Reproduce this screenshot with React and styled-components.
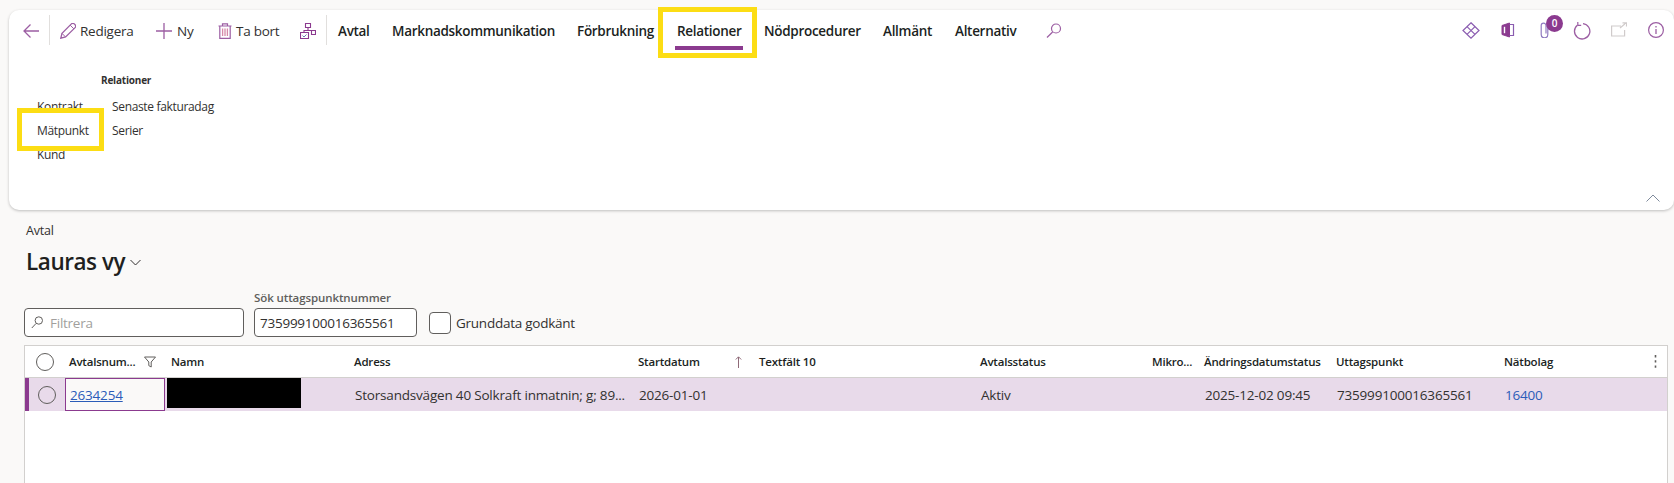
import React from 'react'
import styled, { createGlobalStyle } from 'styled-components'

const purple = '#8b3a8f'
const soft = '#9c5ea3'

const Global = createGlobalStyle`
  html, body {
    margin: 0;
    padding: 0;
    background: #faf9f8;
    font-family: "Open Sans", "Noto Sans", sans-serif;
    color: #201f1e;
  }
`

const Page = styled.div`
  position: relative;
  width: 1674px;
  height: 483px;
  overflow: hidden;
  display: flex;
  flex-direction: column;
  background: #faf9f8;
`

const Card = styled.section`
  box-sizing: border-box;
  height: 200px;
  margin: 10px 0 0 9px;
  width: 1665px;
  flex-shrink: 0;
  display: flex;
  flex-direction: column;
  background: #fff;
  border-radius: 10px;
  box-shadow: 0 1px 3px rgba(0, 0, 0, 0.24);
`

const Toolbar = styled.div`
  display: flex;
  align-items: center;
  height: 42px;
  padding-left: 6px;
`

const Divider = styled.div`
  width: 1px;
  height: 30px;
  background: #e1dfdd;
  margin-top: -2px;
`

const BackButton = styled.div`
  box-sizing: border-box;
  width: 34px;
  padding-left: 8px;
  display: flex;
`

const Action = styled.div`
  display: flex;
  align-items: center;
  gap: ${p => p.$gap || 4}px;
  width: ${p => p.$w}px;
  margin-left: ${p => p.$ml || 0}px;
  font-size: 13.5px;
  letter-spacing: -0.25px;
  line-height: 20px;
  color: #323130;
  flex-shrink: 0;
`

const TabBar = styled.div`
  display: flex;
  align-items: center;
  margin-left: 11px;
`

const Tab = styled.div`
  position: relative;
  box-sizing: border-box;
  width: ${p => p.$w}px;
  flex-shrink: 0;
  font-size: 13.5px;
  font-weight: 600;
  letter-spacing: -0.3px;
  line-height: 20px;
  color: #201f1e;
  white-space: nowrap;

  ${p => p.$active && `
    &::after {
      content: '';
      position: absolute;
      left: -2px;
      top: 25px;
      width: 68px;
      height: 4px;
      background: ${purple};
    }
  `}
`

const RightIcons = styled.div`
  display: flex;
  margin-left: auto;
`

const IconButton = styled.div`
  position: relative;
  width: 37px;
  display: flex;
  justify-content: center;
`

const Badge = styled.span`
  position: absolute;
  left: 20px;
  top: -7px;
  width: 17px;
  height: 17px;
  border-radius: 50%;
  background: ${purple};
  color: #fff;
  font-size: 10px;
  font-weight: 600;
  line-height: 17px;
  text-align: center;
`

const Group = styled.div`
  padding: 21px 0 0 28px;
`

const GroupTitle = styled.div`
  margin-left: 64px;
  font-size: 10px;
  font-weight: 700;
  letter-spacing: -0.2px;
  line-height: 14px;
  color: #323130;
`

const GroupGrid = styled.div`
  display: grid;
  grid-template-columns: 75px auto;
  grid-template-rows: repeat(3, 24px);
  grid-auto-flow: column;
  justify-content: start;
  margin-top: 8px;
`

const GroupItem = styled.div`
  font-size: 12px;
  letter-spacing: -0.34px;
  line-height: 24px;
  color: #323130;
  white-space: nowrap;
`

const CollapseRow = styled.div`
  display: flex;
  justify-content: flex-end;
  margin-top: auto;
  padding: 0 14px 8px 0;
`

const Content = styled.main`
  flex: 1;
  display: flex;
  flex-direction: column;
  min-height: 0;
  padding: 11px 6px 0 24px;
`

const Breadcrumb = styled.div`
  padding-left: 2px;
  font-size: 12.5px;
  letter-spacing: -0.2px;
  line-height: 20px;
  color: #323130;
`

const TitleRow = styled.div`
  display: flex;
  align-items: center;
  gap: 5px;
  padding-left: 2px;
  margin-top: 5px;
  height: 32px;
`

const Title = styled.h1`
  margin: 0;
  font-size: 22.5px;
  font-weight: 600;
  letter-spacing: -0.45px;
  line-height: 32px;
  color: #201f1e;
`

const FilterRow = styled.div`
  display: flex;
  align-items: flex-end;
  margin-top: 12px;
`

const Field = styled.div`
  display: flex;
  flex-direction: column;
  width: ${p => p.$w}px;
  margin-right: ${p => p.$mr}px;
`

const FieldLabel = styled.label`
  font-size: 11.5px;
  font-weight: 600;
  letter-spacing: -0.1px;
  line-height: 16px;
  margin-bottom: 2px;
  color: #605e5c;
  white-space: nowrap;
`

const InputBox = styled.div`
  box-sizing: border-box;
  height: 29px;
  display: flex;
  align-items: center;
  gap: 7px;
  padding-left: ${p => p.$pl}px;
  background: #fff;
  border: 1px solid #605e5c;
  border-radius: 4px;
  font-size: 13.5px;
  letter-spacing: -0.25px;
  color: ${p => (p.$placeholder ? '#a19f9d' : '#323130')};
`

const Check = styled.div`
  box-sizing: border-box;
  width: 22px;
  height: 22px;
  margin: 0 5px 3px 0;
  background: #fff;
  border: 1px solid #605e5c;
  border-radius: 4px;
`

const CheckLabel = styled.span`
  font-size: 13.5px;
  letter-spacing: -0.25px;
  line-height: 22px;
  margin-bottom: 3px;
  color: #323130;
`

const Table = styled.div`
  box-sizing: border-box;
  flex: 1;
  width: 1644px;
  margin-top: 8px;
  background: #fff;
  border: 1px solid #d2d0ce;
  border-bottom: 0;
`

const HeadRow = styled.div`
  display: grid;
  grid-template-columns: 40px 102px 183px 284px 121px 221px 172px 52px 132px 168px 150px 17px;
  align-items: center;
  height: 31px;
  border-bottom: 1px solid #d2d0ce;
`

const HeadCell = styled.div`
  display: flex;
  align-items: center;
  justify-content: ${p => (p.$between ? 'space-between' : 'flex-start')};
  padding: 0 ${p => p.$pr || 0}px 0 4px;
  font-size: 11.5px;
  font-weight: 600;
  letter-spacing: -0.2px;
  color: #201f1e;
  white-space: nowrap;
`

const SelectCell = styled.div`
  display: flex;
  justify-content: center;
`

const Radio = styled.span`
  box-sizing: border-box;
  width: 18px;
  height: 18px;
  border: 1px solid #605e5c;
  border-radius: 50%;
  background: ${p => (p.$dim ? 'transparent' : '#fff')};
`

const DataRow = styled.div`
  display: grid;
  grid-template-columns: 36px 102px 183px 284px 121px 221px 172px 52px 132px 168px 150px 17px;
  align-items: center;
  height: 33px;
  background: #e8daea;
  border-left: 4px solid ${purple};
`

const DataCell = styled.div`
  padding-left: 5px;
  font-size: 13.5px;
  letter-spacing: -0.19px;
  color: #323130;
  white-space: nowrap;
`

const FocusCell = styled.div`
  box-sizing: border-box;
  height: 33px;
  margin-right: 2px;
  padding-left: 4px;
  display: flex;
  align-items: center;
  background: #faf9f8;
  border: 1px solid ${purple};
  font-size: 13.5px;
  letter-spacing: -0.19px;
`

const TableLink = styled.a`
  color: #2b5cb8;
  text-decoration: ${p => (p.$plain ? 'none' : 'underline')};
`

const Redaction = styled.div`
  width: 134px;
  height: 30px;
  margin-top: -4px;
  background: #000;
`

const Callout = styled.div`
  position: absolute;
  box-sizing: border-box;
  left: ${p => p.$x}px;
  top: ${p => p.$y}px;
  width: ${p => p.$w}px;
  height: ${p => p.$h}px;
  border: 5px solid #fcdd14;
  pointer-events: none;
`

const Icon = ({ w = 16, h = 16, children }) => (
  <svg width={w} height={h} viewBox={`0 0 ${w} ${h}`} fill="none" stroke={purple} strokeWidth="1">
    {children}
  </svg>
)

const tabs = [
  ['Avtal', 54],
  ['Marknadskommunikation', 185],
  ['Förbrukning', 100],
  ['Relationer', 87],
  ['Nödprocedurer', 119],
  ['Allmänt', 72],
  ['Alternativ', 91],
]

const App = () => (
  <Page>
    <Global />
    <Card>
      <Toolbar>
        <BackButton>
          <Icon>
            <path d="M16 8H1M7.5 1.5L1 8l6.5 6.5" stroke={soft} strokeWidth="1.3" />
          </Icon>
        </BackButton>
        <Divider />
        <Action $w={96} $ml={10}>
          <Icon>
            <path d="M.8 15.2l1.2-4.8L11.4.9a2 2 0 0 1 2.9 0l.8.8a2 2 0 0 1 0 2.9L5.6 14z" stroke={soft} strokeWidth="1.3" />
            <path d="M2 10.4l3.6 3.6M10.2 2.2l3.6 3.6" stroke={soft} />
          </Icon>
          Redigera
        </Action>
        <Action $w={61} $gap={5}>
          <Icon>
            <path d="M0 8h16M8 0v16" stroke={soft} strokeWidth="1.3" />
          </Icon>
          Ny
        </Action>
        <Action $w={83} $gap={3}>
          <Icon>
            <path d="M1.5 3h13M5.5 3V.8h5V3M2.8 3v12.4h10.4V3" stroke={soft} strokeWidth="1.2" />
            <path d="M5.6 5.5v7.5M8 5.5v7.5M10.4 5.5v7.5" stroke="#d58aa8" strokeWidth="1.3" />
          </Icon>
          Ta bort
        </Action>
        <Action $w={26}>
          <Icon>
            <path d="M5.5 .5h5v4h-5zM11.5 7.5h4v4h-4zM.5 9.5h8v6h-8zM8 4.5v3M4 9.5V7.5h9" strokeWidth="1.1" />
            <path d="M2.5 12.5l1.5 1.5 2.5-2.5" stroke="#6d7fb5" />
          </Icon>
        </Action>
        <Divider />
        <TabBar>
          {tabs.map(([label, w]) => (
            <Tab key={label} $w={w} $active={label === 'Relationer'}>{label}</Tab>
          ))}
          <Icon>
            <circle cx="10" cy="5.5" r="4.5" stroke={soft} strokeWidth="1.2" />
            <path d="M6.6 9L1 14.5" stroke={soft} strokeWidth="1.2" />
          </Icon>
        </TabBar>
        <RightIcons>
          <IconButton>
            <Icon w={18} h={17}>
              <path d="M9 .8L17 8.5 9 16.2 1 8.5zM5 4.65L13 12.35M13 4.65L5 12.35" stroke="#8a5cb0" strokeWidth="1.2" />
            </Icon>
          </IconButton>
          <IconButton>
            <Icon w={14}>
              <path d="M1 3.5L8.5 1v14L1 12.5z" fill={purple} />
              <path d="M8.5 2.5h4v11h-4" stroke="#8a5cb0" strokeWidth="1.2" />
              <path d="M3.5 4.8v6.4" stroke="#fff" strokeWidth="1.4" />
            </Icon>
          </IconButton>
          <IconButton>
            <Icon w={10}>
              <path d="M7.8 3.5v9a3.3 3.3 0 0 1-6.6 0V3.5a2.4 2.4 0 0 1 4.8 0v8" stroke="#8f7ac0" strokeWidth="1.2" />
            </Icon>
            <Badge>0</Badge>
          </IconButton>
          <IconButton>
            <Icon w={18} h={18}>
              <path d="M10 1.6A7.7 7.7 0 1 1 4.4 3.2" stroke={soft} strokeWidth="1.3" />
              <path d="M4.8 0v3.4h3.4" stroke={soft} strokeWidth="1.2" />
            </Icon>
          </IconButton>
          <IconButton>
            <Icon>
              <g stroke="#d0cbcb" strokeWidth="1.2">
                <path d="M10 4H.6v10h13V8M9 6l6-5M11.5 .8H15.5V4.6" />
              </g>
            </Icon>
          </IconButton>
          <IconButton>
            <Icon>
              <circle cx="8" cy="8" r="7.4" stroke={soft} strokeWidth="1.2" />
              <path d="M8 7v5M8 4v1.4" stroke={soft} strokeWidth="1.3" />
            </Icon>
          </IconButton>
        </RightIcons>
      </Toolbar>
      <Group>
        <GroupTitle>Relationer</GroupTitle>
        <GroupGrid>
          <GroupItem>Kontrakt</GroupItem>
          <GroupItem>Mätpunkt</GroupItem>
          <GroupItem>Kund</GroupItem>
          <GroupItem>Senaste fakturadag</GroupItem>
          <GroupItem>Serier</GroupItem>
        </GroupGrid>
      </Group>
      <CollapseRow>
        <Icon w={14} h={8}>
          <path d="M.5 7.5L7 1l6.5 6.5" stroke="#7f8a9c" />
        </Icon>
      </CollapseRow>
    </Card>
    <Content>
      <Breadcrumb>Avtal</Breadcrumb>
      <TitleRow>
        <Title>Lauras vy</Title>
        <Icon w={11} h={7}>
          <path d="M.5 1L5.5 6l5-5" stroke="#323130" />
        </Icon>
      </TitleRow>
      <FilterRow>
        <Field $w={220} $mr={10}>
          <InputBox $pl={6} $placeholder>
            <Icon w={12} h={13}>
              <circle cx="7.8" cy="4.5" r="3.7" stroke="#605e5c" />
              <path d="M5 7.5L.8 12" stroke="#605e5c" />
            </Icon>
            Filtrera
          </InputBox>
        </Field>
        <Field $w={163} $mr={12}>
          <FieldLabel>Sök uttagspunktnummer</FieldLabel>
          <InputBox $pl={5}>735999100016365561</InputBox>
        </Field>
        <Check />
        <CheckLabel>Grunddata godkänt</CheckLabel>
      </FilterRow>
      <Table>
        <HeadRow>
          <SelectCell><Radio /></SelectCell>
          <HeadCell $between $pr={11}>
            Avtalsnum...
            <Icon w={12} h={12}>
              <path d="M.5 1h11L7.2 6v5l-2.4-1.4V6z" stroke="#605e5c" />
            </Icon>
          </HeadCell>
          <HeadCell>Namn</HeadCell>
          <HeadCell>Adress</HeadCell>
          <HeadCell $between $pr={13}>
            Startdatum
            <Icon w={7} h={12}>
              <path d="M3.5 12V1M.8 3.5L3.5.8l2.7 2.7" stroke="#8f6a78" />
            </Icon>
          </HeadCell>
          <HeadCell>Textfält 10</HeadCell>
          <HeadCell>Avtalsstatus</HeadCell>
          <HeadCell>Mikro...</HeadCell>
          <HeadCell>Ändringsdatumstatus</HeadCell>
          <HeadCell>Uttagspunkt</HeadCell>
          <HeadCell>Nätbolag</HeadCell>
          <HeadCell>
            <Icon w={3} h={13}>
              <path d="M1.5 0v2.4M1.5 5.2v2.4M1.5 10.4v2.4" stroke="#605e5c" strokeWidth="1.6" />
            </Icon>
          </HeadCell>
        </HeadRow>
        <DataRow>
          <SelectCell><Radio $dim /></SelectCell>
          <FocusCell><TableLink>2634254</TableLink></FocusCell>
          <div><Redaction /></div>
          <DataCell>Storsandsvägen 40 Solkraft inmatnin; g; 89...</DataCell>
          <DataCell>2026-01-01</DataCell>
          <DataCell />
          <DataCell>Aktiv</DataCell>
          <DataCell />
          <DataCell>2025-12-02 09:45</DataCell>
          <DataCell>735999100016365561</DataCell>
          <DataCell><TableLink $plain>16400</TableLink></DataCell>
          <DataCell />
        </DataRow>
      </Table>
    </Content>
    <Callout $x={658} $y={7} $w={99} $h={51} />
    <Callout $x={17} $y={108} $w={87} $h={43} />
  </Page>
)

export default App
